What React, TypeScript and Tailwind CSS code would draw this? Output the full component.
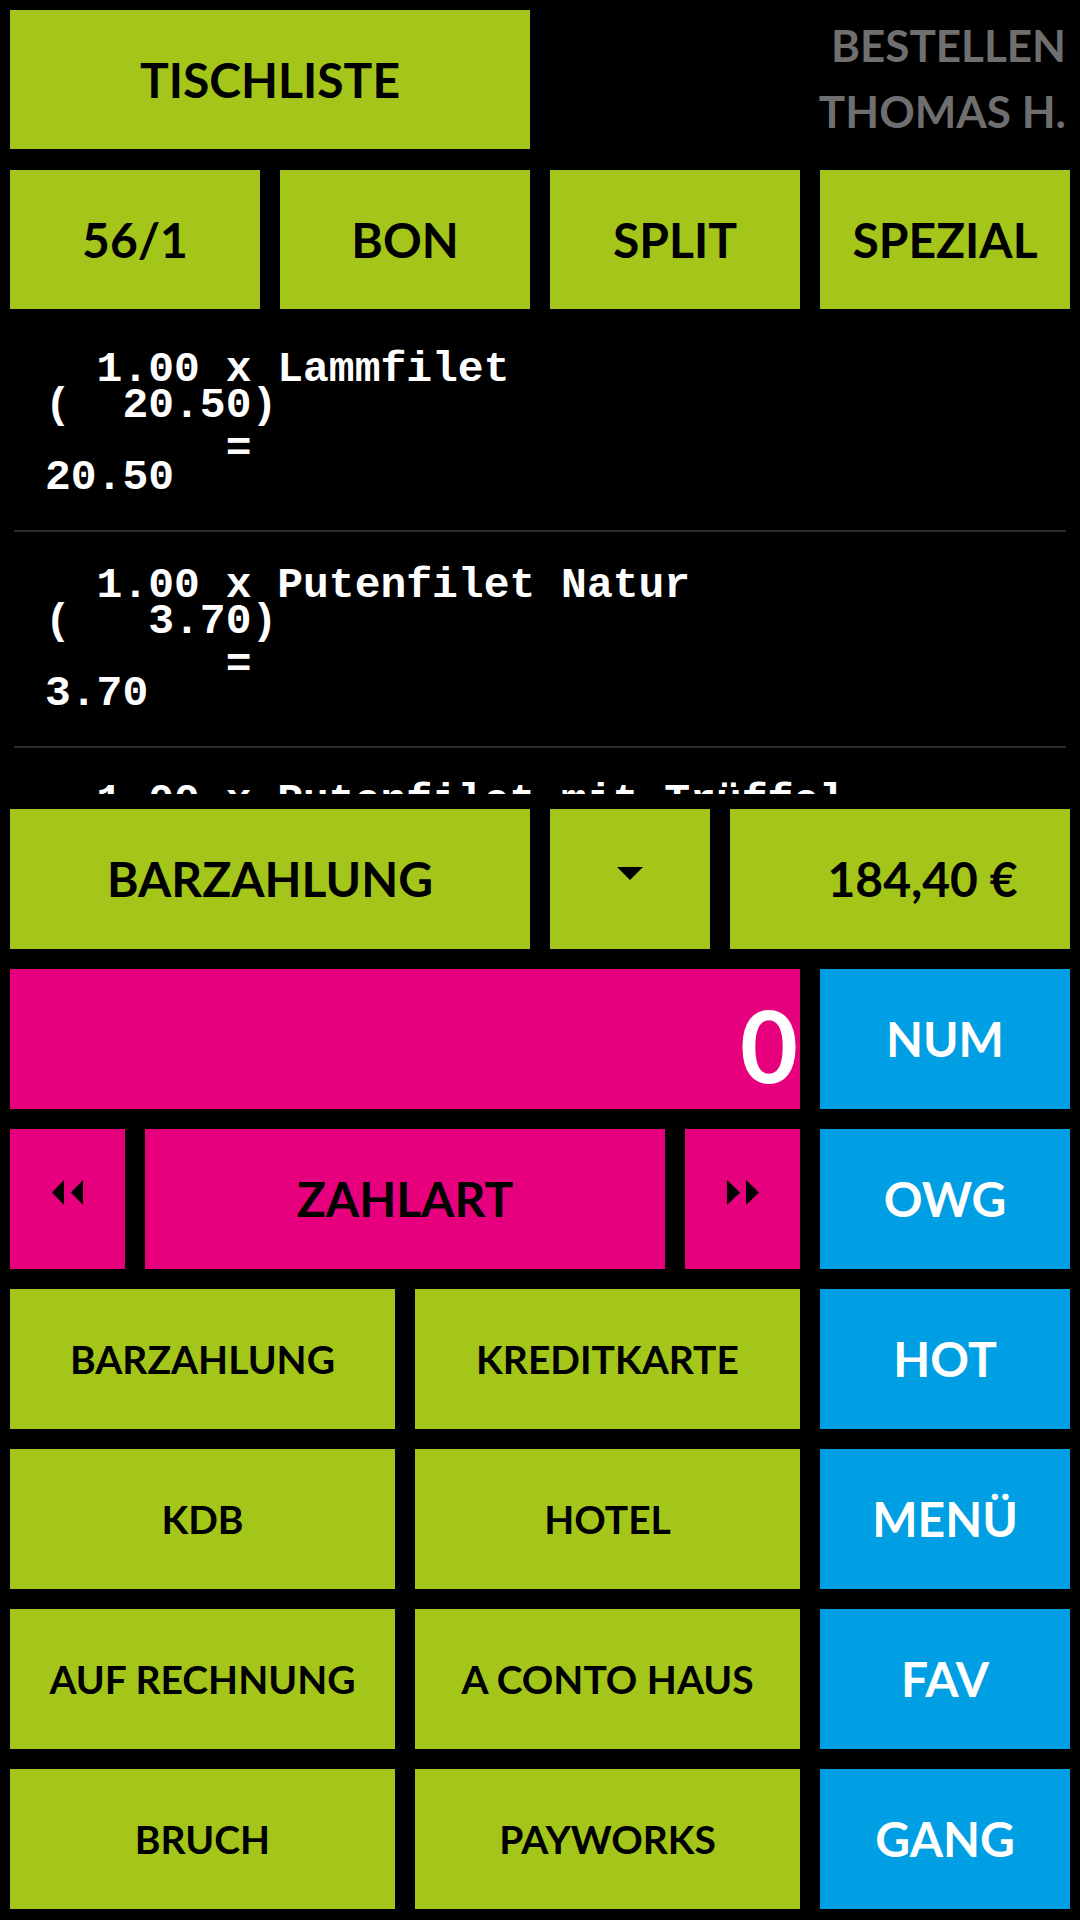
import type { ReactNode } from "react";

// Farben der Kasse
const green = "bg-[#a4c61a] text-black";
const pink = "bg-[#e6007e] text-black";
const blue = "bg-[#009fe3] text-white";

type TileProps = {
  className?: string;
  children?: ReactNode;
};

function Tile({ className = "", children }: TileProps) {
  return (
    <div className={`flex items-center justify-center font-bold leading-none ${className}`}>
      {children}
    </div>
  );
}

type OrderLine = {
  lines: string[];
};

const orderLines: OrderLine[] = [
  { lines: ["  1.00 x Lammfilet", "(  20.50)", "       =", "20.50"] },
  { lines: ["  1.00 x Putenfilet Natur", "(   3.70)", "       =", "3.70"] },
  { lines: ["  1.00 x Putenfilet mit Trüffel", "(  24.90)", "       =", "24.90"] },
];

const payRows = [
  ["BARZAHLUNG", "KREDITKARTE", "HOT"],
  ["KDB", "HOTEL", "MENÜ"],
  ["AUF RECHNUNG", "A CONTO HAUS", "FAV"],
  ["BRUCH", "PAYWORKS", "GANG"],
];

function DoubleArrow({ dir }: { dir: "left" | "right" }) {
  return (
    <svg width="32" height="25" viewBox="0 0 32 25" className="-mt-[13px]">
      {dir === "left" ? (
        <>
          <polygon points="12,0 12,25 0,12.5" fill="#000" />
          <polygon points="31,0 31,25 19,12.5" fill="#000" />
        </>
      ) : (
        <>
          <polygon points="0,0 0,25 13,12.5" fill="#000" />
          <polygon points="19,0 19,25 32,12.5" fill="#000" />
        </>
      )}
    </svg>
  );
}

export default function App() {
  return (
    <div className="w-[1080px] h-[1920px] bg-black px-[10px] pt-[10px] overflow-hidden font-[Lato,sans-serif]">
      {/* Kopfzeile */}
      <div className="flex h-[139px] gap-[20px]">
        <Tile className={`w-[520px] text-[48px] ${green}`}>TISCHLISTE</Tile>
        <div className="flex-1 flex flex-col items-end pt-[2px] pr-[4px] text-[44px] leading-[66px] font-bold text-[#6f6f6f]">
          <span>BESTELLEN</span>
          <span>THOMAS H.</span>
        </div>
      </div>

      <div className="mt-[21px] flex h-[139px] gap-[20px]">
        {["56/1", "BON", "SPLIT", "SPEZIAL"].map((label) => (
          <Tile key={label} className={`w-[250px] text-[48px] ${green}`}>
            {label}
          </Tile>
        ))}
      </div>

      {/* Bonliste */}
      <div className="h-[485px] overflow-hidden pt-[7px] font-['Liberation_Mono',monospace] text-[43px] font-bold leading-[36px] text-white">
        {orderLines.map((item, i) => (
          <div key={i} className="mx-[4px] border-b-2 border-[#2a2a2a] pt-[36px] pb-[34px]">
            {item.lines.map((line, j) => (
              <div key={j} className={`whitespace-pre pl-[31px] ${j === 2 ? "relative top-[8px]" : ""}`}>
                {line}
              </div>
            ))}
          </div>
        ))}
      </div>

      {/* Zahlung */}
      <div className="mt-[15px] flex h-[140px] gap-[20px]">
        <Tile className={`w-[520px] text-[48px] ${green}`}>BARZAHLUNG</Tile>
        <Tile className={`w-[160px] ${green}`}>
          <svg width="26" height="13" viewBox="0 0 26 13" className="-mt-[12px]">
            <polygon points="0,0 26,0 13,13" fill="#000" />
          </svg>
        </Tile>
        <Tile className={`w-[340px] pl-[45px] text-[48px] ${green}`}>184,40 €</Tile>
      </div>

      <div className="mt-[20px] flex h-[140px] gap-[20px]">
        <div className={`w-[790px] flex items-center justify-end pr-[2px] ${pink}`}>
          <span className="mt-[10px] text-[100px] font-bold leading-none text-white">0</span>
        </div>
        <Tile className={`w-[250px] text-[48px] ${blue}`}>NUM</Tile>
      </div>

      <div className="mt-[20px] flex h-[140px] gap-[20px]">
        <Tile className={`w-[115px] ${pink}`}>
          <DoubleArrow dir="left" />
        </Tile>
        <Tile className={`w-[520px] text-[48px] ${pink}`}>ZAHLART</Tile>
        <Tile className={`w-[115px] ${pink}`}>
          <DoubleArrow dir="right" />
        </Tile>
        <Tile className={`w-[250px] text-[48px] ${blue}`}>OWG</Tile>
      </div>

      {payRows.map(([a, b, c]) => (
        <div key={a} className="mt-[20px] flex h-[140px] gap-[20px]">
          <Tile className={`w-[385px] text-[39px] ${green}`}>{a}</Tile>
          <Tile className={`w-[385px] text-[39px] ${green}`}>{b}</Tile>
          <Tile className={`w-[250px] text-[48px] ${blue}`}>{c}</Tile>
        </div>
      ))}
    </div>
  );
}
